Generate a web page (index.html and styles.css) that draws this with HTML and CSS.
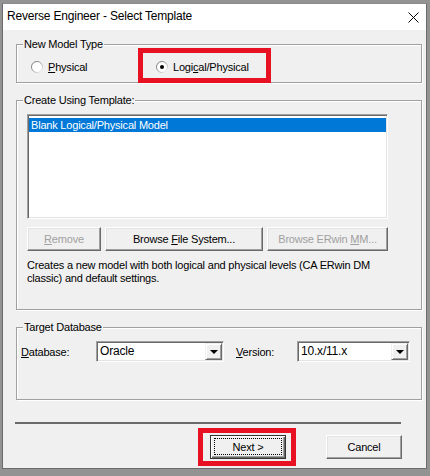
FILE: index.html
```html
<!DOCTYPE html>
<html lang="en">
<head>
    <meta charset="UTF-8">
    <title>Reverse Engineer - Select Template</title>
    <link rel="stylesheet" href="styles.css">
</head>
<body>
    <div class="window">
        <div class="titlebar">
            <span class="title">Reverse Engineer - Select Template</span>
            <svg class="close" width="11" height="11" viewBox="0 0 11 11">
                <path d="M0.5 0.5 L10.5 10.5 M10.5 0.5 L0.5 10.5" stroke="#000" stroke-width="1" fill="none"/>
            </svg>
        </div>

        <div class="client">
            <fieldset class="group group-type">
                <legend>New Model Type</legend>
                <div class="radios">
                    <label class="radio radio-first">
                        <svg class="radio-icon" width="12" height="12" viewBox="0 0 12 12">
                            <circle cx="6" cy="6" r="5.5" fill="#fff" stroke="url(#ring)"/>
                        </svg>
                        <span><u>P</u>hysical</span>
                    </label>
                    <label class="radio">
                        <svg class="radio-icon" width="12" height="12" viewBox="0 0 12 12">
                            <defs>
                                <linearGradient id="ring" x1="0" y1="0" x2="1" y2="1">
                                    <stop offset="0" stop-color="#6d6d6d"/>
                                    <stop offset="0.5" stop-color="#a0a0a0"/>
                                    <stop offset="1" stop-color="#ffffff"/>
                                </linearGradient>
                            </defs>
                            <circle cx="6" cy="6" r="5.5" fill="#fff" stroke="url(#ring)"/>
                            <circle cx="6" cy="6" r="2" fill="#000"/>
                        </svg>
                        <span>Logi<u>c</u>al/Physical</span>
                    </label>
                </div>
            </fieldset>

            <fieldset class="group group-template">
                <legend>Create Using Template:</legend>
                <div class="group-body">
                    <div class="listbox">
                        <div class="list-item selected">Blank Logical/Physical Model</div>
                    </div>
                    <div class="btn-row">
                        <button class="btn btn-remove" disabled><u>R</u>emove</button>
                        <button class="btn btn-browse">Browse <u>F</u>ile System...</button>
                        <button class="btn btn-mm" disabled>Browse ERwin <u>M</u>M...</button>
                    </div>
                    <p class="desc">Creates a new model with both logical and physical levels (CA ERwin DM classic) and default settings.</p>
                </div>
            </fieldset>

            <fieldset class="group group-db">
                <legend>Target Database</legend>
                <div class="db-row">
                    <span class="field-label label-db"><u>D</u>atabase:</span>
                    <div class="combo combo-db">
                        <span class="combo-text">Oracle</span>
                        <span class="combo-btn"><span class="arrow"></span></span>
                    </div>
                    <span class="field-label label-ver"><u>V</u>ersion:</span>
                    <div class="combo combo-ver">
                        <span class="combo-text">10.x/11.x</span>
                        <span class="combo-btn"><span class="arrow"></span></span>
                    </div>
                </div>
            </fieldset>

            <div class="separator"></div>

            <div class="footer">
                <button class="btn btn-default">Next &gt;</button>
                <button class="btn btn-cancel">Cancel</button>
            </div>
        </div>

        <!-- annotation boxes -->
        <div class="mark mark-type"></div>
        <div class="mark mark-next"></div>
    </div>
</body>
</html>
```

FILE: styles.css
```css
body {
    margin: 0;
    padding: 3px 0 0 2px;
    background: #939393;
    font-family: 'Liberation Sans', Arial, sans-serif;
    font-size: 11px;
    letter-spacing: -0.2px;
    color: #000;
    height: 476px;
    box-sizing: border-box;
    overflow: hidden;
}

/* Window frame */
.window {
    position: relative;
    width: 423px;
    background: #f0f0f0;
    border: 1px solid #6b6b6b;
    border-top-color: #8a8a8a;
}

.titlebar {
    height: 26px;
    background: #fff;
    display: flex;
    align-items: center;
    justify-content: space-between;
    padding: 0 7px 2px 4px;
    box-sizing: border-box;
}

.title {
    font-size: 12px;
    letter-spacing: -0.2px;
}

.close {
    display: block;
    margin-top: 2px;
}

.client {
    padding: 0 0 9px 13px;
}

/* Group boxes */
.group {
    margin: 0;
    padding: 0;
    width: 406px;
    min-width: 0;
    box-sizing: border-box;
    border: 1px solid #a0a0a0;
    box-shadow: inset 1px 1px #fff, 1px 1px #fff;
}

.group legend {
    margin-left: 6px;
    padding: 0 1px;
    line-height: 15px;
    background: #f0f0f0;
}

.group-type {
    margin-top: 7px;
}

.group-template,
.group-db {
    margin-top: 10px;
}

/* Radios */
.radios {
    display: flex;
    padding: 7px 0 7px 14px;
}

.radio {
    display: flex;
    align-items: center;
    gap: 5px;
    height: 16px;
    line-height: 16px;
}

.radio-first {
    width: 125px;
}

.radio-icon {
    display: block;
}

/* Template list */
.group-body {
    padding: 6px 0 24px 10px;
}

.listbox {
    width: 361px;
    height: 105px;
    box-sizing: border-box;
    background: #fff;
    border: 1px solid;
    border-color: #a0a0a0 #fff #fff #a0a0a0;
    box-shadow: inset 1px 1px #696969, inset -1px -1px #e3e3e3;
    padding: 2px 1px;
}

.list-item {
    line-height: 14px;
    padding-left: 2px;
    margin-top: 1px;
}

.list-item.selected {
    background: #0078d7;
    color: #fff;
}

.btn-row {
    display: flex;
    gap: 4px;
    margin-top: 8px;
}

/* Buttons */
.btn {
    height: 24px;
    padding: 0;
    font: inherit;
    letter-spacing: inherit;
    color: #000;
    background: #f0f0f0;
    border: 1px solid;
    border-color: #fff #696969 #696969 #fff;
    box-shadow: inset -1px -1px #a0a0a0, inset 1px 1px #e3e3e3;
    border-radius: 0;
}

.btn:disabled {
    color: #a0a0a0;
}

.btn-remove {
    width: 74px;
}

.btn-browse {
    width: 158px;
}

.btn-mm {
    width: 121px;
}

.desc {
    margin: 8px 0 0;
    width: 361px;
    line-height: 13px;
}

/* Target database */
.db-row {
    display: flex;
    align-items: center;
    padding: 6px 0 37px 4px;
}

.field-label {
    line-height: 14px;
}

.label-db {
    width: 75px;
}

.label-ver {
    width: 61px;
    margin-left: 12px;
}

.combo {
    height: 21px;
    box-sizing: border-box;
    display: flex;
    justify-content: space-between;
    background: #fff;
    border: 1px solid;
    border-color: #a0a0a0 #fff #fff #a0a0a0;
    box-shadow: inset 1px 1px #696969, inset -1px -1px #e3e3e3;
    padding: 1px;
}

.combo-db {
    width: 128px;
}

.combo-ver {
    width: 113px;
}

.combo-text {
    padding-left: 2px;
    line-height: 17px;
    font-size: 12px;
}

.combo-btn {
    width: 17px;
    height: 17px;
    box-sizing: border-box;
    background: #f0f0f0;
    border: 1px solid;
    border-color: #f0f0f0 #696969 #696969 #f0f0f0;
    box-shadow: inset 1px 1px #fff, inset -1px -1px #a0a0a0;
    display: flex;
    align-items: center;
    justify-content: center;
}

.arrow {
    width: 0;
    height: 0;
    border-left: 4px solid transparent;
    border-right: 4px solid transparent;
    border-top: 4px solid #000;
    margin-top: 1px;
}

/* Footer */
.separator {
    width: 386px;
    height: 2px;
    margin: 22px 0 0 -1px;
    background: #6a6a6a;
}

.footer {
    display: flex;
    gap: 40px;
    margin: 11px 0 0 194px;
}

.btn-default,
.btn-cancel {
    width: 76px;
}

.btn-default {
    position: relative;
    border-color: #333;
    box-shadow: inset 1px 1px #fff, inset -1px -1px #696969, inset -2px -2px #a0a0a0;
}

.btn-default::after {
    content: "";
    position: absolute;
    inset: 2px 3px 3px 3px;
    border: 1px dotted #000;
}

/* Red annotation boxes */
.mark {
    position: absolute;
    border: 5px solid #e81123;
    box-sizing: border-box;
}

.mark-type {
    left: 135px;
    top: 44px;
    width: 133px;
    height: 35px;
}

.mark-next {
    left: 195px;
    top: 424px;
    width: 98px;
    height: 38px;
}
```
